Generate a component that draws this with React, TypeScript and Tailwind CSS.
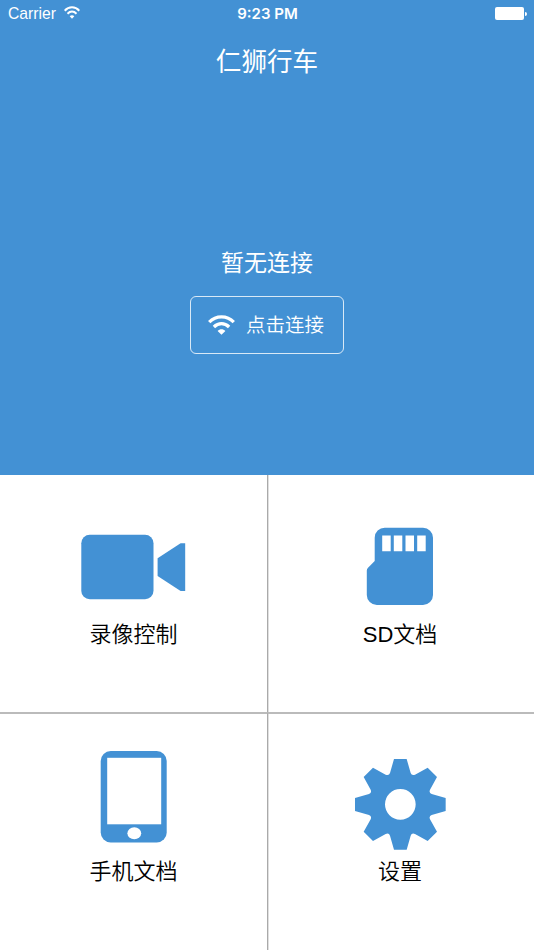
import type { ReactNode } from 'react';

function WifiIcon({ className }: { className: string }) {
  return (
    <svg viewBox="0 0 27 20" preserveAspectRatio="none" className={className} fill="none" stroke="currentColor" strokeWidth="3.3">
      <path d="M1.2 7.2C8 0.2 19 0.2 25.8 7.2" />
      <path d="M5.9 12C10.4 7.6 16.6 7.6 21.1 12" />
      <path d="M13.5 19.8L9.6 15.9C11.8 13.6 15.2 13.6 17.4 15.9Z" fill="currentColor" stroke="none" />
    </svg>
  );
}

function CameraIcon() {
  return (
    <svg viewBox="0 0 105 66" className="w-[105px] h-[66px]" fill="currentColor">
      <rect x="0.3" y="0.8" width="72.2" height="64.5" rx="8.5" />
      <path d="M76.6 24.3L99.6 9.2H104.2V57H99.6L76.6 42Z" />
    </svg>
  );
}

function SdCardIcon() {
  return (
    <svg viewBox="0 0 68 79" className="w-[68px] h-[79px]" fill="currentColor">
      <path d="M18.8 0.7H57A10 10 0 0 1 67 10.7V68A10 10 0 0 1 57 78H10.8A10 10 0 0 1 0.8 68V43.5Q0.8 42 1.8 41L8.7 34V10.7A10 10 0 0 1 18.8 0.7Z" />
      <path fill="white" d="M16.2 8.5H24.7V24.2H16.2ZM27.8 8.5H36.3V24.2H27.8ZM39.5 8.5H48V24.2H39.5ZM51.2 8.5H59.7V24.2H51.2Z" />
    </svg>
  );
}

function PhoneIcon() {
  return (
    <svg viewBox="0 0 68 93" className="w-[68px] h-[93px]" fill="currentColor">
      <rect x="0.7" y="1" width="66" height="91.5" rx="10" />
      <rect x="7.2" y="7.8" width="54" height="66.5" fill="white" />
      <ellipse cx="34.3" cy="83.3" rx="6.9" ry="6" fill="white" />
    </svg>
  );
}

function GearIcon() {
  return (
    <svg viewBox="-139 -139 276 276" className="w-[92px] h-[92px]" fill="currentColor">
      <path
        fillRule="evenodd"
        d="M-19 -136H19L31 -94Q34 -85 44 -89L82 -110L110 -82L89 -44Q85 -34 94 -31L136 -19V20L94 32Q85 35 89 45L110 82L82 110L44 89Q34 85 31 94L19 136H-19L-31 94Q-34 85 -44 89L-82 110L-110 82L-89 45Q-85 35 -94 32L-136 20V-19L-94 -31Q-85 -34 -89 -44L-110 -82L-82 -110L-44 -89Q-34 -85 -31 -94ZM46 0A46 46 0 1 0 -46 0A46 46 0 1 0 46 0Z"
      />
    </svg>
  );
}

function Tile({ icon, label, className }: { icon: ReactNode; label: string; className: string }) {
  return (
    <button className={`flex flex-col items-center text-[#4391d4] ${className}`}>
      {icon}
      <span className="mt-auto text-[22px] leading-8 font-[350] text-black">{label}</span>
    </button>
  );
}

export default function App() {
  return (
    <div className="w-[534px] h-[950px] flex flex-col bg-white overflow-hidden font-['Liberation_Sans','Noto_Sans_CJK_SC',sans-serif]">
      <header className="h-[475px] shrink-0 bg-[#4391d4] text-white flex flex-col items-center">
        <div className="w-full h-7 grid grid-cols-3 items-center pl-2 pr-[7px]">
          <div className="flex items-center gap-2">
            <span className="text-[15.7px]">Carrier</span>
            <WifiIcon className="w-4 h-[13px] mb-0.5" />
          </div>
          <span className="text-center text-[15px] font-semibold font-['Inter',sans-serif]">9:23 PM</span>
          <div className="flex items-center justify-end gap-px">
            <span className="w-[29px] h-[13px] mb-px rounded-[2px] bg-white" />
            <span className="w-0.5 h-1 mb-px rounded-r-full bg-white" />
          </div>
        </div>

        <h1 className="mt-3 h-11 text-[25.6px] leading-[44px]">仁狮行车</h1>

        <p className="mt-[163px] h-8 text-[23px] leading-8">暂无连接</p>
        <button className="mt-[17px] w-[154px] h-[58px] shrink-0 rounded-md border border-white/80 flex items-center pl-[17px] gap-[11px]">
          <WifiIcon className="w-[27px] h-5" />
          <span className="pt-0.5 text-[19.5px] font-[350]">点击连接</span>
        </button>
      </header>

      <main className="h-[475px] grid grid-cols-[267px_267px] grid-rows-[237px_238px]">
        <Tile icon={<CameraIcon />} label="录像控制" className="pt-[59px] pb-[61px]" />
        <Tile icon={<SdCardIcon />} label="SD文档" className="pt-[52px] pb-[61px] pr-0.5 border-l border-[#aaaaaa] shadow-[inset_1px_0_0_#e0e0e0]" />
        <Tile icon={<PhoneIcon />} label="手机文档" className="pt-[36px] pb-[62px] border-t-2 border-[#bbbbbb]" />
        <Tile icon={<GearIcon />} label="设置" className="pt-[44px] pb-[62px] pr-0.5 border-t-2 border-l border-t-[#bbbbbb] border-l-[#aaaaaa] shadow-[inset_1px_0_0_#e0e0e0]" />
      </main>
    </div>
  );
}
